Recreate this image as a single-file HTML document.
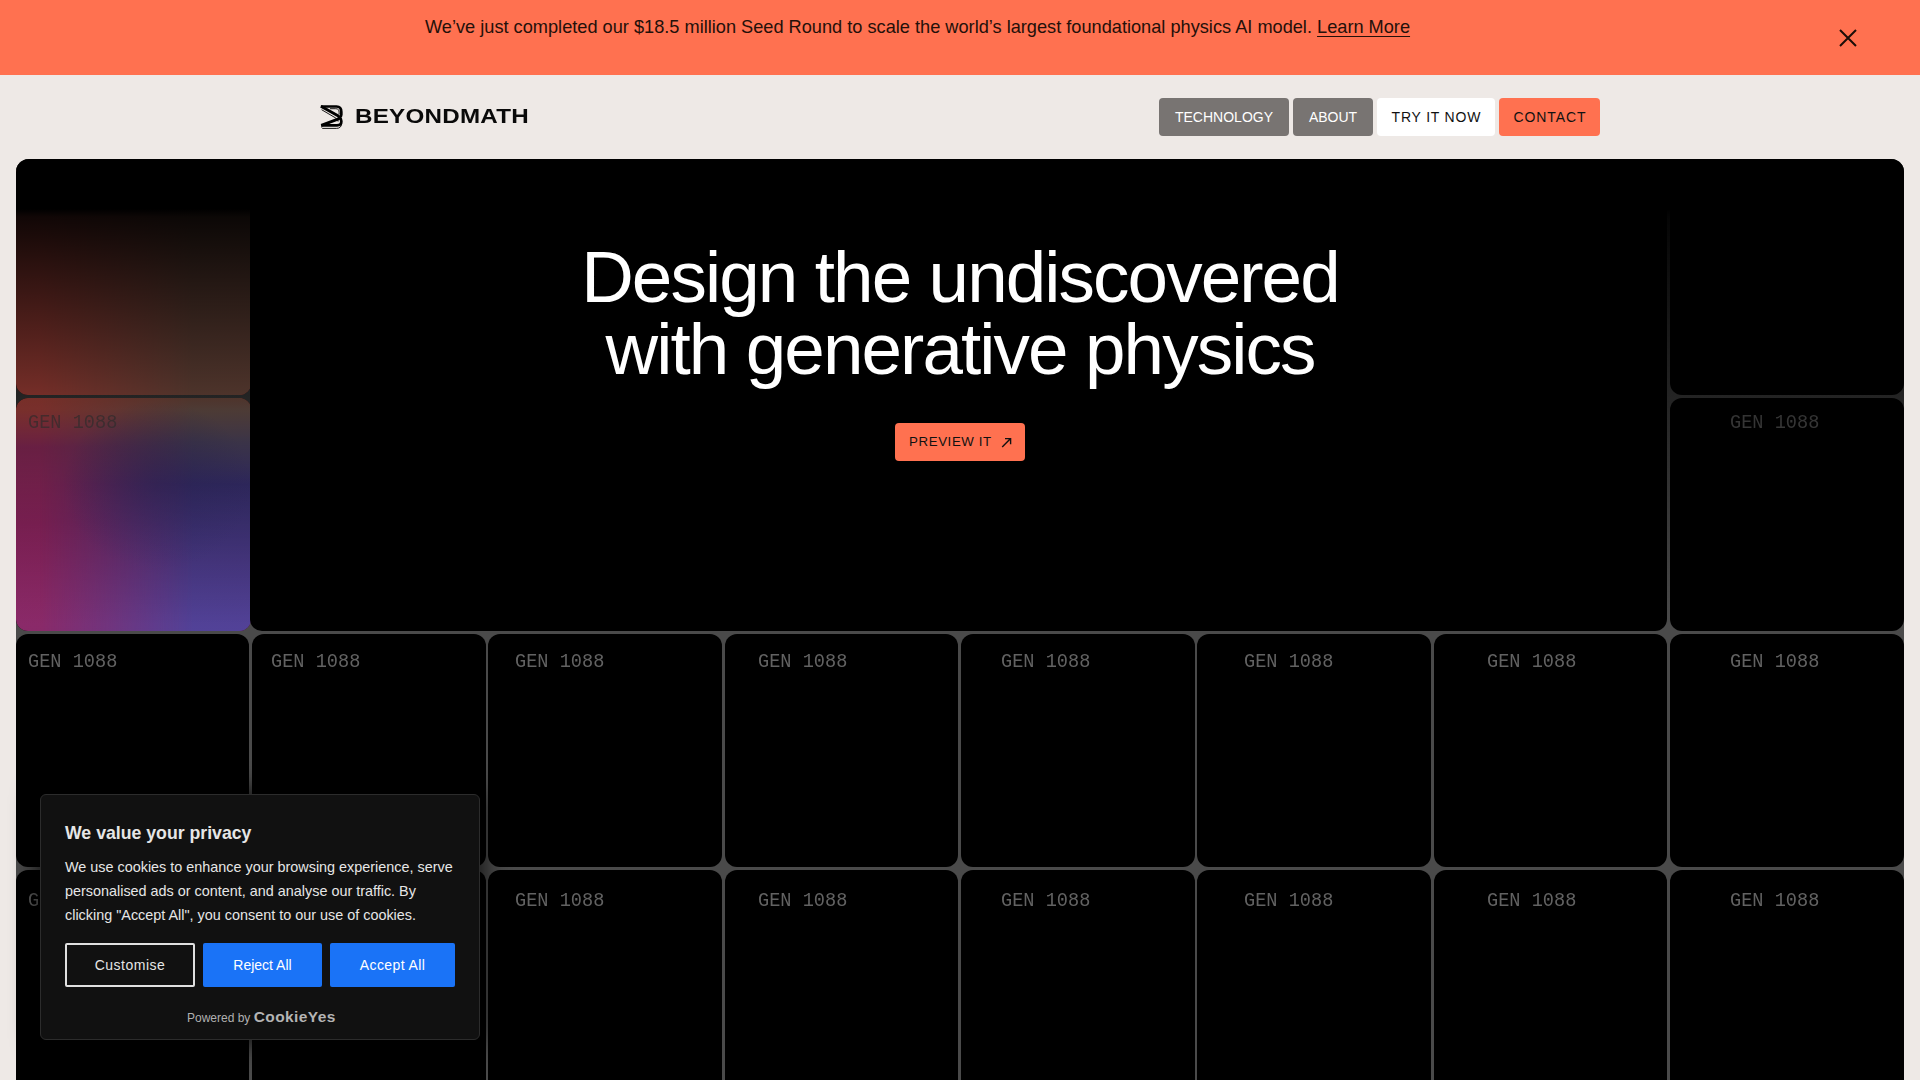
<!DOCTYPE html>
<html><head><meta charset="utf-8">
<style>
*{box-sizing:border-box;margin:0;padding:0}
html,body{width:1920px;height:1080px;overflow:hidden;background:#EEE9E6;font-family:"Liberation Sans",sans-serif}
.banner{position:absolute;left:0;top:0;width:1920px;height:75px;background:#FF7150;color:#24100a}
.banner .txt{position:absolute;left:425px;top:16px;font-size:18.2px;white-space:nowrap;line-height:22px}
.banner .txt u{text-decoration:underline;text-underline-offset:3px;text-decoration-thickness:1px}
.close{position:absolute;left:1839px;top:29px;width:18px;height:18px}
.logo{position:absolute;left:320px;top:104px}
.logotext{position:absolute;left:355px;top:104px;font-weight:bold;font-size:20.5px;line-height:24px;white-space:nowrap;color:#0a0a0a;letter-spacing:0.2px;transform-origin:0 0;transform:scaleX(1.18)}
.nav{position:absolute;top:98px;height:38px;border-radius:4px;font-size:14px;line-height:38px;white-space:nowrap;text-align:center}
.nav.g{background:#787472;color:#fff}
.nav.w{background:#fff;color:#111}
.nav.o{background:#FF7150;color:#111}
.hero{position:absolute;left:16px;top:159px;width:1888px;height:1000px;background:#000;border-radius:13px;overflow:hidden}
.grid{position:absolute;left:0;top:0;width:1888px;height:1000px;background:#4a4a4a}
.cell{position:absolute;background:#000;border-radius:12px}
.gen{position:absolute;font-family:"Liberation Mono",monospace;font-size:20px;line-height:20px;color:#626262;white-space:nowrap;transform-origin:0 0;transform:scaleX(0.93)}
.fade{position:absolute;left:0;top:0;width:1888px;height:480px;background:linear-gradient(to bottom,#000 0px,#000 50px,rgba(0,0,0,0.93) 58px,rgba(0,0,0,0) 466px)}
.center{position:absolute;background:#000;border-radius:12px}
h1{position:absolute;left:0;width:1888px;top:82px;text-align:center;color:#fff;font-weight:normal;font-size:72.8px;line-height:72px;letter-spacing:-1.9px}
.preview{position:absolute;left:879px;top:264px;width:130px;height:38px;background:#FF7150;border-radius:4px;color:#111;font-size:13.3px;line-height:38px;white-space:nowrap}
.cookie{position:absolute;left:40px;top:794px;width:440px;height:246px;background:#111;border:1px solid #2c2c2c;border-radius:6px;box-shadow:0 0 24px 4px rgba(0,0,0,0.75);color:#e6e6e6}
.cookie h2{position:absolute;left:24px;top:27px;font-size:17.7px;font-weight:bold;line-height:22px;white-space:nowrap}
.cookie p{position:absolute;left:24px;top:60px;font-size:14.4px;line-height:24px;white-space:nowrap}
.cbtn{position:absolute;top:148px;height:44px;font-size:14px;line-height:44px;text-align:center;border-radius:2px;white-space:nowrap}
.powered{position:absolute;left:146px;top:214px;font-size:12px;line-height:16px;color:#b0b0b0;white-space:nowrap}
</style></head><body>
<div class="banner">
  <div class="txt">We’ve just completed our $18.5 million Seed Round to scale the world’s largest foundational physics AI model. <u>Learn More</u></div>
  <svg class="close" viewBox="0 0 18 18"><path d="M1 1L17 17M17 1L1 17" stroke="#1a0d08" stroke-width="2"/></svg>
</div>

<svg class="logo" width="24" height="26" viewBox="0 0 24 26">
  <path d="M0.9,2.5 L16.5,2.5 C19.8,2.5 21.3,4.3 21.3,7.8 L21.3,10.8 C21.3,12.3 20.6,13.2 19.4,13.8 C20.6,14.4 21.3,15.4 21.3,16.9 L21.3,18 C21.3,20.3 19.8,21.3 17,21.3 L1.2,21.3" fill="none" stroke="#000" stroke-width="2.7" stroke-linejoin="round"/>
  <path d="M0.9,2.2 L17.5,11.6 C19.5,12.8 19.8,14 18.6,14.8 L1.2,21.3" fill="none" stroke="#000" stroke-width="2.9" stroke-linejoin="round"/>
  <path d="M1.6,5.7 L15,13.6 C16.9,14.8 17.8,16 18.1,17.6" fill="none" stroke="#000" stroke-width="0.9"/>
  <path d="M10,4.7 L15.8,4.7 C18.2,4.7 19.1,6 19.1,8.4 L19.1,10.6" fill="none" stroke="#000" stroke-width="0.9"/>
  <path d="M8.2,19.4 L15.8,16.2" fill="none" stroke="#000" stroke-width="0.9"/>
  <path d="M1.6,23.6 L2.6,24.4 L16.6,24.4 C19.6,24.4 21.6,22.6 21.6,19.6" fill="none" stroke="#000" stroke-width="0.9"/>
</svg>
<div class="logotext">BEYONDMATH</div>

<div class="nav g" style="left:1159px;width:130px">TECHNOLOGY</div>
<div class="nav g" style="left:1293px;width:80px">ABOUT</div>
<div class="nav w" style="left:1377px;width:118px;letter-spacing:0.8px;text-indent:0.8px">TRY IT NOW</div>
<div class="nav o" style="left:1499px;width:101px;letter-spacing:0.9px;text-indent:0.9px">CONTACT</div>

<div class="hero">
  <div class="grid" id="grid">
<div class="cell" style="left:-0.43px;top:3.00px;width:235.83px;height:233.40px;overflow:hidden;"><div style="position:absolute;left:0;top:0.00px;width:235.83px;height:469.40px;background:linear-gradient(to bottom,rgb(240,95,82) 0px,rgb(245,96,84) 236px,rgb(235,92,85) 248px,rgb(175,52,112) 285px,rgb(154,39,103) 360px,rgb(137,42,105) 470px)"></div><div style="position:absolute;left:0;top:0.00px;width:235.83px;height:469.40px;-webkit-mask-image:linear-gradient(to right,rgba(0,0,0,0) 10%,#000 75%);mask-image:linear-gradient(to right,rgba(0,0,0,0) 10%,#000 75%);background:linear-gradient(to bottom,rgb(165,106,86) 0px,rgb(162,108,90) 236px,rgb(150,115,104) 248px,rgb(100,88,122) 280px,rgb(66,56,132) 322px,rgb(78,60,142) 400px,rgb(82,66,152) 470px)"></div><div style="position:absolute;left:0;top:0.00px;width:235.83px;height:469.40px;background:radial-gradient(ellipse 40% 18% at 60% 69%,rgba(62,50,120,0.5) 0%,rgba(62,50,120,0) 100%)"></div></div>
<div class="cell" style="left:-0.43px;top:239.00px;width:235.83px;height:233.40px;overflow:hidden;"><div style="position:absolute;left:0;top:-236.00px;width:235.83px;height:469.40px;background:linear-gradient(to bottom,rgb(240,95,82) 0px,rgb(245,96,84) 236px,rgb(235,92,85) 248px,rgb(175,52,112) 285px,rgb(154,39,103) 360px,rgb(137,42,105) 470px)"></div><div style="position:absolute;left:0;top:-236.00px;width:235.83px;height:469.40px;-webkit-mask-image:linear-gradient(to right,rgba(0,0,0,0) 10%,#000 75%);mask-image:linear-gradient(to right,rgba(0,0,0,0) 10%,#000 75%);background:linear-gradient(to bottom,rgb(165,106,86) 0px,rgb(162,108,90) 236px,rgb(150,115,104) 248px,rgb(100,88,122) 280px,rgb(66,56,132) 322px,rgb(78,60,142) 400px,rgb(82,66,152) 470px)"></div><div style="position:absolute;left:0;top:-236.00px;width:235.83px;height:469.40px;background:radial-gradient(ellipse 40% 18% at 60% 69%,rgba(62,50,120,0.5) 0%,rgba(62,50,120,0) 100%)"></div></div>
<div class="cell" style="left:1653.88px;top:3.00px;width:233.73px;height:233.40px;"></div>
<div class="cell" style="left:1653.88px;top:239.00px;width:233.73px;height:233.40px;"></div>
<div class="cell" style="left:-0.43px;top:475.00px;width:233.73px;height:233.40px;"></div>
<div class="cell" style="left:235.90px;top:475.00px;width:233.73px;height:233.40px;"></div>
<div class="cell" style="left:472.23px;top:475.00px;width:233.73px;height:233.40px;"></div>
<div class="cell" style="left:708.56px;top:475.00px;width:233.73px;height:233.40px;"></div>
<div class="cell" style="left:944.89px;top:475.00px;width:233.73px;height:233.40px;"></div>
<div class="cell" style="left:1181.22px;top:475.00px;width:233.73px;height:233.40px;"></div>
<div class="cell" style="left:1417.55px;top:475.00px;width:233.73px;height:233.40px;"></div>
<div class="cell" style="left:1653.88px;top:475.00px;width:233.73px;height:233.40px;"></div>
<div class="cell" style="left:-0.43px;top:711.00px;width:233.73px;height:233.40px;"></div>
<div class="cell" style="left:235.90px;top:711.00px;width:233.73px;height:233.40px;"></div>
<div class="cell" style="left:472.23px;top:711.00px;width:233.73px;height:233.40px;"></div>
<div class="cell" style="left:708.56px;top:711.00px;width:233.73px;height:233.40px;"></div>
<div class="cell" style="left:944.89px;top:711.00px;width:233.73px;height:233.40px;"></div>
<div class="cell" style="left:1181.22px;top:711.00px;width:233.73px;height:233.40px;"></div>
<div class="cell" style="left:1417.55px;top:711.00px;width:233.73px;height:233.40px;"></div>
<div class="cell" style="left:1653.88px;top:711.00px;width:233.73px;height:233.40px;"></div>
<div class="cell" style="left:234.30px;top:3.00px;width:1416.98px;height:469.40px;"></div>
<div class="gen" style="left:12.30px;top:253.75px;color:rgba(80,80,80,0.65);">GEN 1088</div>
<div class="gen" style="left:1714.49px;top:253.75px;">GEN 1088</div>
<div class="gen" style="left:12.30px;top:493.00px;">GEN 1088</div>
<div class="gen" style="left:255.47px;top:493.00px;">GEN 1088</div>
<div class="gen" style="left:498.64px;top:493.00px;">GEN 1088</div>
<div class="gen" style="left:741.81px;top:493.00px;">GEN 1088</div>
<div class="gen" style="left:984.98px;top:493.00px;">GEN 1088</div>
<div class="gen" style="left:1228.15px;top:493.00px;">GEN 1088</div>
<div class="gen" style="left:1471.32px;top:493.00px;">GEN 1088</div>
<div class="gen" style="left:1714.49px;top:493.00px;">GEN 1088</div>
<div class="gen" style="left:12.30px;top:732.25px;">GEN 1088</div>
<div class="gen" style="left:255.47px;top:732.25px;">GEN 1088</div>
<div class="gen" style="left:498.64px;top:732.25px;">GEN 1088</div>
<div class="gen" style="left:741.81px;top:732.25px;">GEN 1088</div>
<div class="gen" style="left:984.98px;top:732.25px;">GEN 1088</div>
<div class="gen" style="left:1228.15px;top:732.25px;">GEN 1088</div>
<div class="gen" style="left:1471.32px;top:732.25px;">GEN 1088</div>
<div class="gen" style="left:1714.49px;top:732.25px;">GEN 1088</div>
</div>
<div class="fade"></div>
  <h1>Design the undiscovered<br>with generative physics</h1>
  <div class="preview"><span style="position:absolute;left:14px;letter-spacing:0.6px">PREVIEW IT</span><svg style="position:absolute;left:106px;top:14px" width="11" height="11" viewBox="0 0 11 11"><path d="M1.2 10L9.6 1.6M4 1.6H9.6V7.2" fill="none" stroke="#111" stroke-width="1.4"/></svg></div>
</div>

<div class="cookie">
  <h2>We value your privacy</h2>
  <p>We use cookies to enhance your browsing experience, serve<br>personalised ads or content, and analyse our traffic. By<br>clicking "Accept All", you consent to our use of cookies.</p>
  <div class="cbtn" style="left:24px;width:130px;border:2px solid #e0e0e0;line-height:40px;color:#e6e6e6;letter-spacing:0.5px">Customise</div>
  <div class="cbtn" style="left:162px;width:119px;background:#1a73f7;color:#fff">Reject All</div>
  <div class="cbtn" style="left:289px;width:125px;background:#1a73f7;color:#fff;letter-spacing:0.4px">Accept All</div>
  <div class="powered">Powered by <b style="font-size:15.5px;color:#b4b4b4;letter-spacing:0.4px">CookieYes</b></div>
</div>
</body></html>
